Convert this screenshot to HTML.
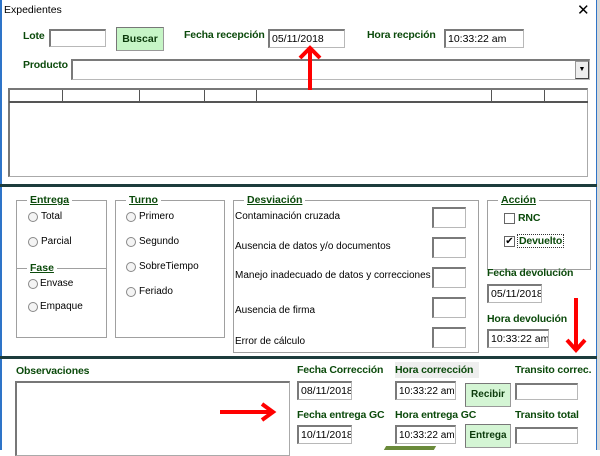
<!DOCTYPE html>
<html><head><meta charset="utf-8"><style>
*{margin:0;padding:0;box-sizing:border-box}
body{width:600px;height:450px;overflow:hidden;background:#fff;font-family:"Liberation Sans",sans-serif;font-size:10px;color:#000;position:relative}
.a{position:absolute;white-space:nowrap}
.l{position:absolute;white-space:nowrap;font-weight:bold;color:#0b4a0b;font-size:10.5px;letter-spacing:-0.15px}
.in{position:absolute;white-space:nowrap;overflow:hidden;background:#fff;border:1px solid #b8b8b8;border-top:2px solid #7a7a7a;border-left:2px solid #7a7a7a;font-size:10.5px;padding:2px 0 0 2px;line-height:13px}
.fr{position:absolute;border:1px solid #a0a0a0}
.ft{position:absolute;top:-7px;left:10px;background:#fff;padding:0 3px;font-weight:bold;color:#0b4a0b;text-decoration:underline;font-size:10.5px}
.rd{position:absolute;width:10px;height:10px;border-radius:50%;border:1px solid #888;background:#f4f4f4}
.bt{position:absolute;background:#d4f5d4;border:1px solid #999;border-top-color:#777;border-left-color:#777;font-weight:bold;color:#0b3a0b;text-align:center;font-size:10.5px}
.sep{position:absolute;left:0;width:597px;height:3px;background:#1c3c3c}
</style></head><body>
<div class="a" style="left:0;top:0;width:2px;height:450px;background:#2e74c8"></div>
<div class="a" style="left:596px;top:0;width:4px;height:450px;background:#d8d8d8;border-left:1px solid #2e74c8"></div>
<div class="a" style="left:4px;top:4px;font-size:10.5px">Expedientes</div>
<div class="a" style="left:577px;top:1px;font-size:15px;font-family:'DejaVu Sans';font-weight:200">✕</div>

<div class="l" style="left:23px;top:30px">Lote</div>
<div class="in" style="left:49px;top:29px;width:57px;height:18px"></div>
<div class="bt" style="left:116px;top:27px;width:48px;height:24px;line-height:22px;background:#c6f5c6">Buscar</div>
<div class="l" style="left:184px;top:29px">Fecha recepción</div>
<div class="in" style="left:268px;top:29px;width:77px;height:19px">05/11/2018</div>
<div class="l" style="left:367px;top:29px">Hora recpción</div>
<div class="in" style="left:444px;top:29px;width:80px;height:19px">10:33:22 am</div>
<div class="l" style="left:23px;top:59px">Producto</div>
<div class="in" style="left:71px;top:59px;width:519px;height:21px"></div>
<div class="a" style="left:575px;top:61px;width:14px;height:18px;border:1px solid #999;border-right-color:#444;border-bottom-color:#444;background:#eee;font-size:7px;text-align:center;line-height:16px">▼</div>

<div class="a" style="left:8px;top:88px;width:580px;height:89px;border:1px solid #aaa;border-top:2px solid #777;border-left:2px solid #777"></div>
<div class="a" style="left:9px;top:90px;width:579px;height:13px;border-bottom:2px solid #555"></div>
<div class="a" style="left:62px;top:90px;width:1px;height:13px;background:#555"></div>
<div class="a" style="left:139px;top:90px;width:1px;height:13px;background:#555"></div>
<div class="a" style="left:204px;top:90px;width:1px;height:13px;background:#555"></div>
<div class="a" style="left:256px;top:90px;width:1px;height:13px;background:#555"></div>
<div class="a" style="left:491px;top:90px;width:1px;height:13px;background:#555"></div>
<div class="a" style="left:544px;top:90px;width:1px;height:13px;background:#555"></div>

<svg class="a" style="left:298px;top:44px" width="24" height="46"><path d="M12 4V46" stroke="#f00" stroke-width="4"/><path d="M2 14L12 4L22 14" stroke="#f00" stroke-width="4" fill="none"/></svg>

<div class="sep" style="top:184px"></div>

<div class="fr" style="left:16px;top:200px;width:91px;height:69px"><div class="ft">Entrega</div></div>
<div class="rd" style="left:28px;top:212px"></div><div class="a" style="left:41px;top:211px">Total</div>
<div class="rd" style="left:28px;top:237px"></div><div class="a" style="left:41px;top:236px">Parcial</div>
<div class="fr" style="left:16px;top:268px;width:91px;height:70px"><div class="ft">Fase</div></div>
<div class="rd" style="left:28px;top:279px"></div><div class="a" style="left:40px;top:278px">Envase</div>
<div class="rd" style="left:28px;top:302px"></div><div class="a" style="left:40px;top:301px">Empaque</div>
<div class="fr" style="left:115px;top:200px;width:110px;height:138px"><div class="ft">Turno</div></div>
<div class="rd" style="left:126px;top:212px"></div><div class="a" style="left:139px;top:211px">Primero</div>
<div class="rd" style="left:126px;top:237px"></div><div class="a" style="left:139px;top:236px">Segundo</div>
<div class="rd" style="left:126px;top:262px"></div><div class="a" style="left:139px;top:261px">SobreTiempo</div>
<div class="rd" style="left:126px;top:287px"></div><div class="a" style="left:139px;top:286px">Feriado</div>

<div class="fr" style="left:233px;top:200px;width:246px;height:153px"><div class="ft">Desviación</div></div>
<div class="a" style="left:235px;top:211px">Contaminación cruzada</div>
<div class="a" style="left:235px;top:241px">Ausencia de datos y/o documentos</div>
<div class="a" style="left:235px;top:270px">Manejo inadecuado de datos y correcciones</div>
<div class="a" style="left:235px;top:305px">Ausencia de firma</div>
<div class="a" style="left:235px;top:336px">Error de cálculo</div>
<div class="in" style="left:432px;top:207px;width:34px;height:21px"></div>
<div class="in" style="left:432px;top:237px;width:34px;height:21px"></div>
<div class="in" style="left:432px;top:267px;width:34px;height:21px"></div>
<div class="in" style="left:432px;top:297px;width:34px;height:21px"></div>
<div class="in" style="left:432px;top:327px;width:34px;height:21px"></div>

<div class="fr" style="left:487px;top:200px;width:104px;height:70px"><div class="ft">Acción</div></div>
<div class="a" style="left:504px;top:213px;width:11px;height:11px;border:1px solid #666;background:#fff"></div>
<div class="l" style="left:518px;top:212px">RNC</div>
<div class="a" style="left:504px;top:236px;width:11px;height:11px;border:1px solid #666;background:#fff;font-size:10px;line-height:9px;text-align:center">✔</div>
<div class="l" style="left:517px;top:234px;border:1px dotted #333;padding:0 1px">Devuelto</div>
<div class="l" style="left:487px;top:267px">Fecha devolución</div>
<div class="in" style="left:487px;top:284px;width:55px;height:19px">05/11/2018</div>
<div class="l" style="left:487px;top:313px">Hora devolución</div>
<div class="in" style="left:487px;top:329px;width:62px;height:19px">10:33:22 am</div>
<svg class="a" style="left:565px;top:298px" width="22" height="56"><path d="M11 0V50" stroke="#f00" stroke-width="4"/><path d="M2 42L11 52L20 42" stroke="#f00" stroke-width="4" fill="none"/></svg>

<div class="sep" style="top:356px"></div>

<div class="l" style="left:16px;top:365px">Observaciones</div>
<div class="a" style="left:15px;top:381px;width:275px;height:75px;border:1px solid #aaa;border-top:2px solid #777;border-left:2px solid #777"></div>
<svg class="a" style="left:220px;top:402px" width="58" height="20"><path d="M0 10H52" stroke="#f00" stroke-width="4"/><path d="M42 2L53 10L42 18" stroke="#f00" stroke-width="4" fill="none"/></svg>

<div class="l" style="left:297px;top:364px">Fecha Corrección</div>
<div class="in" style="left:297px;top:381px;width:55px;height:19px">08/11/2018</div>
<div class="a" style="left:395px;top:362px;width:84px;height:16px;background:#eee"></div>
<div class="l" style="left:395px;top:364px">Hora corrección</div>
<div class="in" style="left:395px;top:381px;width:61px;height:19px;font-size:10px">10:33:22 am</div>
<div class="bt" style="left:465px;top:383px;width:46px;height:24px;line-height:22px;font-size:10px">Recibir</div>
<div class="l" style="left:515px;top:364px">Transito correc.</div>
<div class="in" style="left:515px;top:383px;width:63px;height:17px"></div>

<div class="l" style="left:297px;top:409px">Fecha entrega GC</div>
<div class="in" style="left:297px;top:425px;width:55px;height:19px">10/11/2018</div>
<div class="l" style="left:395px;top:409px">Hora entrega GC</div>
<div class="in" style="left:395px;top:425px;width:61px;height:19px;font-size:10px">10:33:22 am</div>
<div class="bt" style="left:465px;top:424px;width:46px;height:24px;line-height:22px;font-size:10px">Entrega</div>
<div class="l" style="left:515px;top:409px">Transito total</div>
<div class="in" style="left:515px;top:427px;width:63px;height:17px"></div>
<div class="a" style="left:385px;top:446px;width:50px;height:4px;background:#6a8a3a;transform:skewX(-30deg)"></div>
</body></html>
